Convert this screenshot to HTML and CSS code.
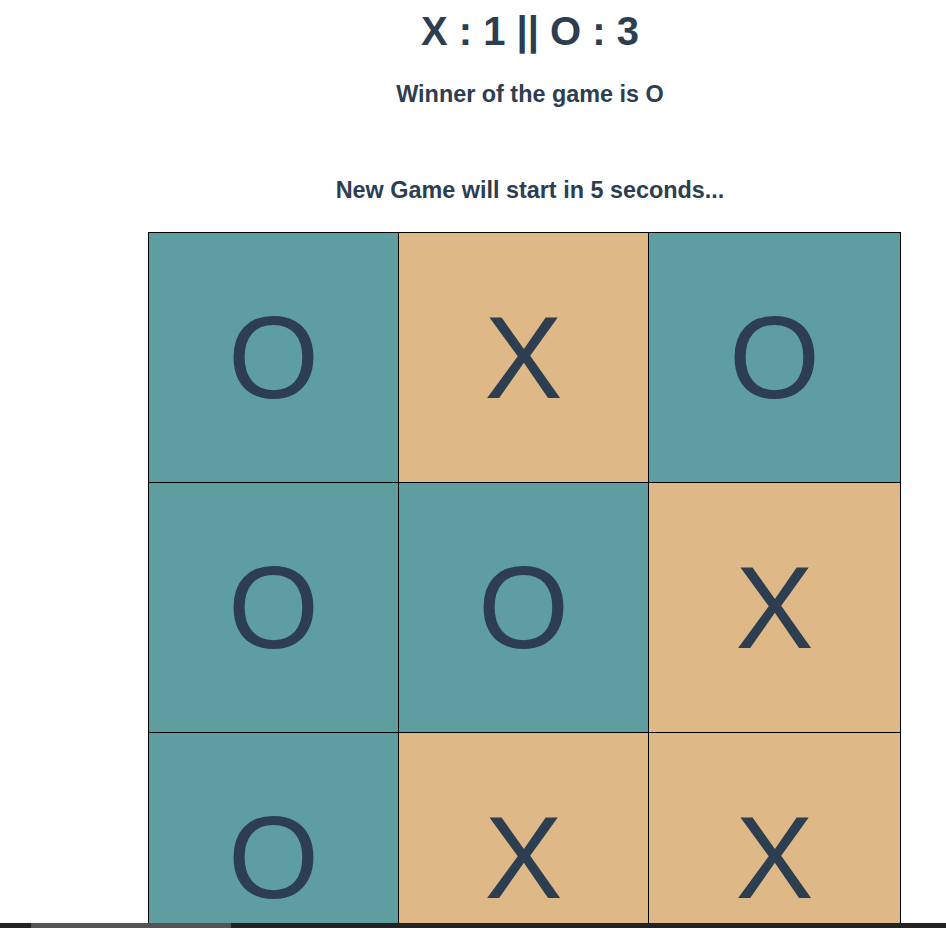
FILE: index.html
```html
<!DOCTYPE html>
<html lang="en">
<head>
<meta charset="utf-8">
<title>Tic Tac Toe</title>
<link rel="stylesheet" href="styles.css">
</head>
<body>
<div class="app">
  <div class="status">
    <h1 class="score">X : 1 || O : 3</h1>
    <h3 class="winner">Winner of the game is O</h3>
    <h3 class="restart">New Game will start in 5 seconds...</h3>
  </div>
  <div class="board">
    <div class="cell o">O</div>
    <div class="cell x">X</div>
    <div class="cell o">O</div>
    <div class="cell o">O</div>
    <div class="cell o">O</div>
    <div class="cell x">X</div>
    <div class="cell o">O</div>
    <div class="cell x">X</div>
    <div class="cell x">X</div>
  </div>
</div>
<div class="hscroll"><div class="hscroll-thumb"></div></div>
</body>
</html>
```
FILE: styles.css
```css
html {
  overflow: hidden;
}
body {
  margin: 0;
  padding-top: 8px;
  font-family: "Liberation Sans", Arial, sans-serif;
  color: #2c3e50;
  background: #fff;
}
.status {
  margin-left: 114px;
  width: 832px;
  text-align: center;
}
.score {
  margin: 0;
  font-size: 40px;
  line-height: 46px;
  font-weight: bold;
}
.winner,
.restart {
  margin: 0;
  font-size: 23.4px;
  line-height: 27px;
  font-weight: bold;
}
.winner {
  margin-top: 27px;
}
.restart {
  margin-top: 69px;
}
.board {
  margin-top: 28px;
  margin-left: 148px;
  display: grid;
  grid-template-columns: 250px 250px 252px;
  grid-auto-rows: 250px;
  width: max-content;
  border-left: 1px solid #000;
  border-top: 1px solid #000;
}
.cell {
  box-sizing: border-box;
  border-right: 1px solid #000;
  border-bottom: 1px solid #000;
  text-align: center;
  font-size: 117px;
  line-height: 249px;
  font-weight: normal;
}
.cell.o {
  background: #5f9ea0;
}
.cell.x {
  background: #deb887;
}
.hscroll {
  position: fixed;
  left: 0;
  right: 0;
  bottom: 0;
  height: 5px;
  background: #232323;
}
.hscroll-thumb {
  margin-left: 31px;
  width: 200px;
  height: 100%;
  background: #545454;
}
```
